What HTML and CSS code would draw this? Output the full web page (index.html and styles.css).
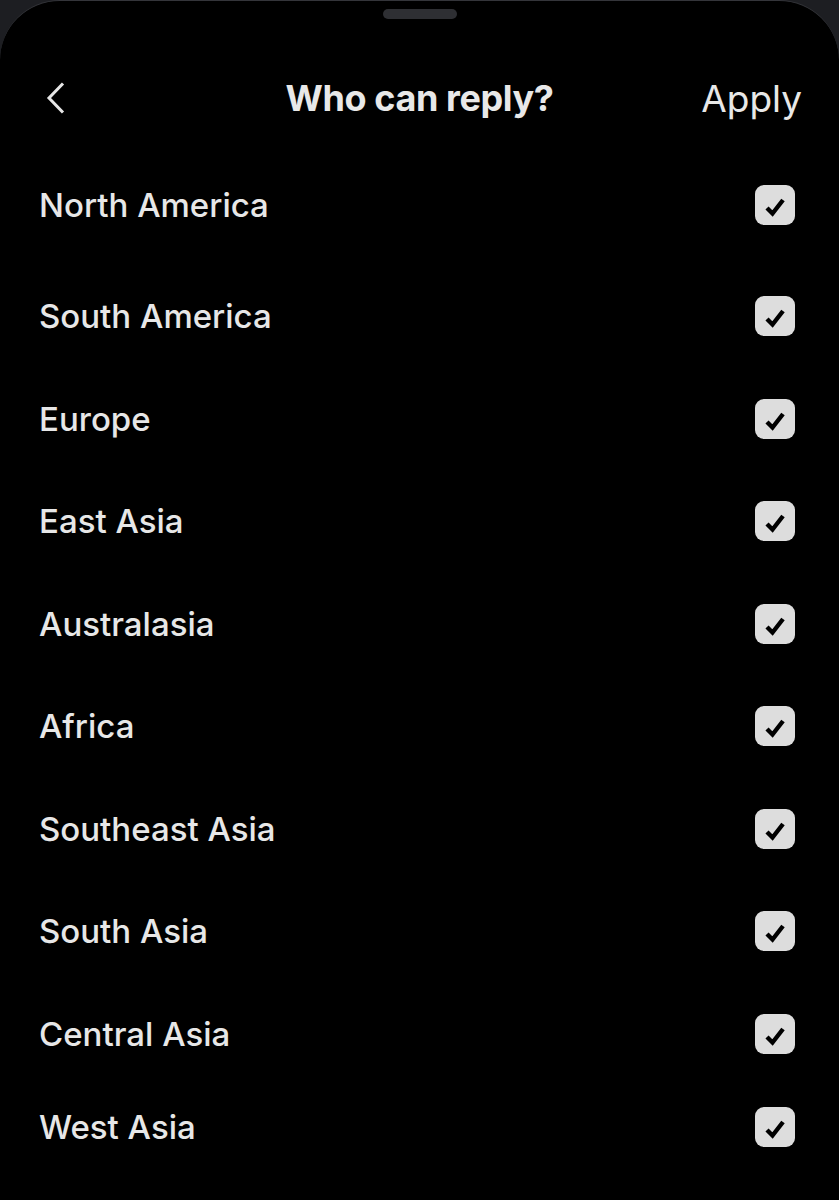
FILE: index.html
```html
<!DOCTYPE html>
<html lang="en">
<head>
    <meta charset="UTF-8">
    <title>Who can reply?</title>
    <link rel="stylesheet" href="styles.css">
</head>
<body>
    <div class="sheet">
        <div class="handle"></div>

        <div class="topbar">
            <button class="back" type="button" aria-label="Back">
                <svg width="20" height="32" viewBox="0 0 20 32">
                    <path d="M17 1.5 L3 16 L17 30.5" fill="none" stroke="#e6e6e6" stroke-width="3"/>
                </svg>
            </button>
            <h1 class="title">Who can reply?</h1>
            <span class="apply">Apply</span>
        </div>

        <ul class="regions">
            <li class="region first"><span>North America</span><span class="box"><svg viewBox="0 0 40 40"><path d="M12 23 L17.5 28.5 L28 15" /></svg></span></li>
            <li class="region"><span>South America</span><span class="box"><svg viewBox="0 0 40 40"><path d="M12 23 L17.5 28.5 L28 15" /></svg></span></li>
            <li class="region"><span>Europe</span><span class="box"><svg viewBox="0 0 40 40"><path d="M12 23 L17.5 28.5 L28 15" /></svg></span></li>
            <li class="region"><span>East Asia</span><span class="box"><svg viewBox="0 0 40 40"><path d="M12 23 L17.5 28.5 L28 15" /></svg></span></li>
            <li class="region"><span>Australasia</span><span class="box"><svg viewBox="0 0 40 40"><path d="M12 23 L17.5 28.5 L28 15" /></svg></span></li>
            <li class="region"><span>Africa</span><span class="box"><svg viewBox="0 0 40 40"><path d="M12 23 L17.5 28.5 L28 15" /></svg></span></li>
            <li class="region"><span>Southeast Asia</span><span class="box"><svg viewBox="0 0 40 40"><path d="M12 23 L17.5 28.5 L28 15" /></svg></span></li>
            <li class="region"><span>South Asia</span><span class="box"><svg viewBox="0 0 40 40"><path d="M12 23 L17.5 28.5 L28 15" /></svg></span></li>
            <li class="region"><span>Central Asia</span><span class="box"><svg viewBox="0 0 40 40"><path d="M12 23 L17.5 28.5 L28 15" /></svg></span></li>
            <li class="region last"><span>West Asia</span><span class="box"><svg viewBox="0 0 40 40"><path d="M12 23 L17.5 28.5 L28 15" /></svg></span></li>
        </ul>
    </div>
</body>
</html>
```

FILE: styles.css
```css
* {
    box-sizing: border-box;
}

body {
    margin: 0;
    background-color: #1d1e22;
    font-family: Inter, "Noto Sans", sans-serif;
    color: #e7e7e7;
}

.sheet {
    min-height: 1200px;
    background-color: #000;
    border-radius: 60px 60px 0 0;
    border-top: 1px solid #34353a;
    padding-top: 8px;
    overflow: hidden;
}

.handle {
    width: 74px;
    height: 10px;
    margin: 0 auto;
    border-radius: 5px;
    background-color: #2e2f33;
}

.topbar {
    display: grid;
    grid-template-columns: 1fr auto 1fr;
    align-items: center;
    height: 50px;
    margin-top: 54px;
    padding: 0 37px;
}

.back {
    justify-self: start;
    display: flex;
    margin-left: 9px;
    padding: 0;
    background: none;
    border: none;
}

.title {
    margin: 0;
    font-size: 36px;
    font-weight: 700;
    letter-spacing: -0.4px;
    color: #e8e8e8;
}

.apply {
    justify-self: end;
    font-size: 37px;
    font-weight: 400;
    color: #e8e8e8;
}

.regions {
    list-style: none;
    margin: 31px 0 0;
    padding: 0 44px 0 39px;
}

.region {
    display: flex;
    justify-content: space-between;
    align-items: center;
    height: 102.5px;
    font-size: 33px;
    font-weight: 500;
}

.region.first {
    margin-bottom: 8.5px;
}

.region.last {
    margin-top: -9.5px;
}

.box {
    display: flex;
    width: 40px;
    height: 40px;
    border-radius: 9px;
    background-color: #dddddd;
}

.box svg {
    width: 40px;
    height: 40px;
}

.box path {
    fill: none;
    stroke: #000;
    stroke-width: 4.4;
    stroke-linecap: butt;
    stroke-linejoin: miter;
}
```
